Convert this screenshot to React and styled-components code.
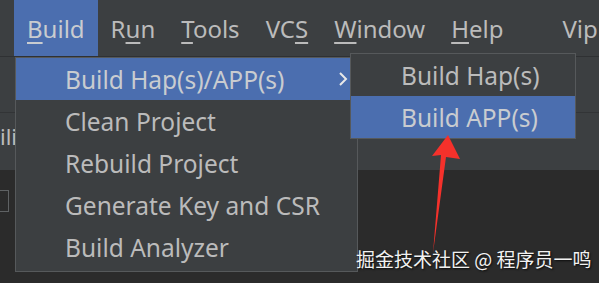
import React from "react";
import styled, { createGlobalStyle } from "styled-components";

const Global = createGlobalStyle`
  html, body {
    margin: 0;
    padding: 0;
    background: #2b2b2b;
  }
  body {
    font-family: "Noto Sans", "Open Sans", sans-serif;
  }
`;

const Screen = styled.div`
  position: relative;
  width: 599px;
  height: 283px;
  overflow: hidden;
  display: flex;
  flex-direction: column;
  background: #2b2b2b;
  color: #bbbbbb;
`;

const MenuBar = styled.div`
  height: 56px;
  display: flex;
  align-items: stretch;
  padding-left: 14px;
  background: #3c3f41;
  border-bottom: 1px solid #2f3133;
  flex-shrink: 0;
`;

const MenuTitle = styled.div`
  display: flex;
  align-items: center;
  padding: 0 ${(p) => p.$pad || 13}px;
  font-size: 24px;
  color: ${(p) => (p.$active ? "#c9ccd0" : "#bbbbbb")};
  background: ${(p) => (p.$active ? "#4b6eaf" : "transparent")};
  white-space: nowrap;
`;

const Mn = styled.span`
  text-decoration: underline;
  text-underline-offset: 4px;
  text-decoration-thickness: 2px;
`;

const Toolbar = styled.div`
  height: 55px;
  background: #3c3f41;
  border-bottom: 1px solid #323436;
  flex-shrink: 0;
`;

const TabRow = styled.div`
  height: 57px;
  background: #3c3f41;
  display: flex;
  align-items: center;
  flex-shrink: 0;
  font-size: 22px;
  padding-bottom: 12px;
  box-sizing: border-box;
`;

const Editor = styled.div`
  flex: 1;
  background: #2b2b2b;
  padding-top: 20px;
`;

const FoldBox = styled.div`
  width: 10px;
  height: 20px;
  margin-left: -3px;
  border: 1px solid #5f6264;
`;

const Dropdown = styled.div`
  position: absolute;
  left: 15px;
  top: 57px;
  width: 341px;
  background: #3c3f41;
  border: 1px solid #56595b;
  display: flex;
  flex-direction: column;
  padding-bottom: 3px;
`;

const Item = styled.div`
  height: 42px;
  display: flex;
  align-items: center;
  justify-content: space-between;
  padding-left: ${(p) => p.$indent || 49}px;
  padding-right: 8px;
  font-size: 24.5px;
  white-space: nowrap;
  color: ${(p) => (p.$active ? "#c9ccd0" : "#bbbbbb")};
  background: ${(p) => (p.$active ? "#4b6eaf" : "transparent")};
`;

const Chevron = styled.svg`
  width: 12px;
  height: 16px;
`;

const Submenu = styled.div`
  position: absolute;
  left: 350px;
  top: 53px;
  width: 224px;
  background: #3c3f41;
  border: 1px solid #56595b;
  display: flex;
  flex-direction: column;
`;

const Arrow = styled.svg`
  position: absolute;
  left: 420px;
  top: 130px;
  width: 50px;
  height: 130px;
`;

const Watermark = styled.div`
  position: absolute;
  left: 356px;
  top: 245px;
  font-family: "Noto Sans CJK SC", "Noto Sans", sans-serif;
  font-size: 19px;
  color: #f2f2f2;
  text-shadow: 1px 1px 2px rgba(0, 0, 0, 0.8);
  white-space: nowrap;
`;

export default function App() {
  return (
    <Screen>
      <Global />
      <MenuBar>
        <MenuTitle $active $pad={13}>
          <span>
            <Mn>B</Mn>uild
          </span>
        </MenuTitle>
        <MenuTitle>
          <span>
            R<Mn>u</Mn>n
          </span>
        </MenuTitle>
        <MenuTitle>
          <span>
            <Mn>T</Mn>ools
          </span>
        </MenuTitle>
        <MenuTitle>
          <span>
            VC<Mn>S</Mn>
          </span>
        </MenuTitle>
        <MenuTitle>
          <span>
            <Mn>W</Mn>indow
          </span>
        </MenuTitle>
        <MenuTitle>
          <span>
            <Mn>H</Mn>elp
          </span>
        </MenuTitle>
        <MenuTitle $pad={46}>Vip</MenuTitle>
      </MenuBar>
      <Toolbar />
      <TabRow>ili</TabRow>
      <Editor>
        <FoldBox />
      </Editor>

      <Dropdown>
        <Item $active>
          <span>Build Hap(s)/APP(s)</span>
          <Chevron viewBox="0 0 12 16">
            <path d="M3 2 L9 8 L3 14" fill="none" stroke="#e8e8e8" strokeWidth="2" />
          </Chevron>
        </Item>
        <Item>Clean Project</Item>
        <Item>Rebuild Project</Item>
        <Item>Generate Key and CSR</Item>
        <Item>Build Analyzer</Item>
      </Dropdown>

      <Submenu>
        <Item $indent={50}>Build Hap(s)</Item>
        <Item $indent={50} $active>
          Build APP(s)
        </Item>
      </Submenu>

      <Arrow viewBox="0 0 50 130">
        <path d="M28 5 L12 26 L21 25 L13 123 L26 27 L40 29 Z" fill="#f5312b" />
      </Arrow>

      <Watermark>掘金技术社区 @ 程序员一鸣</Watermark>
    </Screen>
  );
}
